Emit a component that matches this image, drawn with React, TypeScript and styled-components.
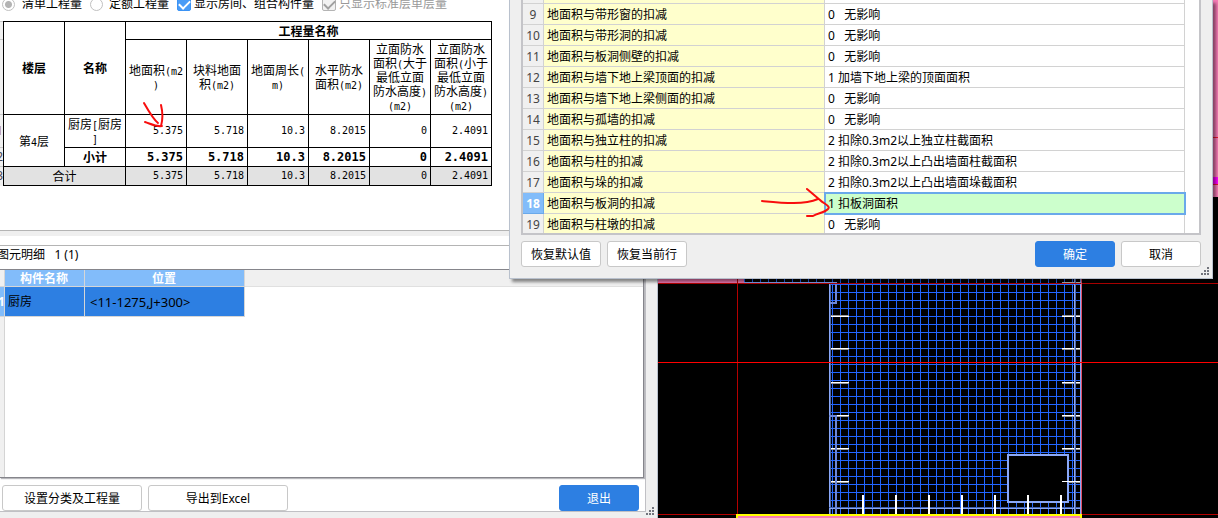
import React from "react";
import styled, { createGlobalStyle, css } from "styled-components";

const uiFont = `"Noto Sans", "Noto Sans CJK SC", sans-serif`;
const reportFont = `"Noto Sans CJK SC", sans-serif`;

const Global = createGlobalStyle`
  * { box-sizing: border-box; }
  body { margin: 0; background: #000; color: #000; font: 12px/16px ${uiFont}; }
  button, input { font: inherit; margin: 0; }
  h2 { margin: 0; font: inherit; }
`;

const Desktop = styled.main`
  position: relative;
  display: grid;
  grid-template-columns: 658fr 560fr;
  min-height: 100vh;
  overflow: hidden;
`;

/* ---------- quantity window ---------- */

const QuantityWindow = styled.section`
  display: flex;
  flex-direction: column;
  min-width: 0;
  padding: 0 11px 6px 0;
  background: #efefef;
  border-right: 1px solid #b9c1cd;
  position: relative;
`;

const ReportPanel = styled.div`
  height: 231px;
  background: #fff;
  border-bottom: 1px solid #b4b4b4;
  margin-bottom: 5px;
`;

const Options = styled.div`
  display: flex;
  align-items: center;
  height: 8px;
  margin-bottom: 13px;
  padding-left: 2px;
  white-space: nowrap;
`;

const Option = styled.label<{ $gap: number; $muted?: boolean }>`
  display: flex;
  align-items: center;
  gap: ${(p) => p.$gap}px;
  margin-right: 8px;
  color: ${(p) => (p.$muted ? "#999" : "#000")};
`;

const Radio = styled.input`
  appearance: none;
  width: 13px;
  height: 13px;
  border: 1px solid #c0c0c0;
  border-radius: 50%;
  background: #fff;
  &:checked {
    background: radial-gradient(circle, #b4b4b4 0 3px, #fff 4px);
  }
`;

const Check = styled.input`
  appearance: none;
  width: 14px;
  height: 14px;
  display: grid;
  place-items: center;
  border: 1px solid #3b93f5;
  border-radius: 2px;
  background: #4a9cf6;
  &::after {
    content: "";
    width: 9px;
    height: 5px;
    border: solid #fff;
    border-width: 0 0 2px 2px;
    transform: translateY(-1px) rotate(-45deg);
  }
  &:disabled {
    border-color: #b4b4b4;
    background: #f2f2f2;
  }
  &:disabled::after {
    border-color: #a0a0a0;
  }
`;

const Report = styled.div`
  display: flex;
`;

const ReportRail = styled.div`
  width: 3px;
  overflow: hidden;
  background: #f0f0f0;
`;

const RailCell = styled.div<{ $h: number; $color?: string }>`
  display: flex;
  justify-content: flex-end;
  align-items: center;
  height: ${(p) => p.$h}px;
  border-top: 1px solid #c8c8c8;
  color: ${(p) => p.$color ?? "#445"};
`;

const ReportTable = styled.table`
  table-layout: fixed;
  width: 489px;
  border-spacing: 0;
  border: solid #000;
  border-width: 1px 0 0 1px;
  font: 12px/14px ${reportFont};
  th, td {
    padding: 0 2px;
    border: solid #000;
    border-width: 0 1px 1px 0;
    text-align: center;
    font-weight: inherit;
    white-space: nowrap;
  }
`;

const ReportRow = styled.tr<{ $h: number; $bold?: boolean; $shade?: boolean }>`
  height: ${(p) => p.$h}px;
  font-weight: ${(p) => (p.$bold ? 700 : 400)};
  background: ${(p) => (p.$shade ? "#e2e2e2" : "#fff")};
`;

const Heading = styled.th`
  && { font-weight: 700; }
`;

const Num = styled.td<{ $bold?: boolean }>`
  && { text-align: right; padding-right: 3px; }
  font-family: "DejaVu Sans Mono", monospace;
  font-size: ${(p) => (p.$bold ? 12 : 10)}px;
`;

const Ascii = styled.span`
  font-family: "DejaVu Sans Mono", monospace;
  font-size: 10px;
  line-height: 10px;
`;

const DetailPanel = styled.div`
  flex: 1;
  display: flex;
  flex-direction: column;
  background: #fff;
  border: solid #c0c0c4;
  border-width: 0 1px 1px 0;
  padding-top: 9px;
`;

const DetailFrame = styled.div`
  flex: 1;
  display: flex;
  flex-direction: column;
  margin-right: 1px;
  border: solid #85858b;
  border-width: 0 1px 1px 0;
  box-shadow: 1px 1px 1px #b8b8bc;
`;

const DetailTitle = styled.h2`
  height: 25px;
  line-height: 18px;
  border-top: 1px solid #b4b4b4;
  border-bottom: 1px solid #85858b;
  text-indent: -3px;
  white-space: pre;
`;

const DetailBody = styled.div`
  flex: 1;
  display: flex;
  background: linear-gradient(#f0f0f0 0 16px, #e0e0e0 16px 17px, #fff 17px);
`;

const DetailGrid = styled.div`
  flex: 1;
  background: linear-gradient(90deg, #f0f0f0 0 4px, #d4d4d4 4px 5px, transparent 5px);
`;

const DetailTable = styled.table`
  table-layout: fixed;
  width: 245px;
  border-spacing: 0;
  th, td {
    padding: 0 4px 0 3px;
    border: solid #d6d6d6;
    border-width: 0 1px 1px 0;
    white-space: nowrap;
  }
  thead tr { height: 17px; line-height: 14px; }
  tbody tr { height: 30px; }
  thead th { padding-top: 2px; background: #82bcfa; color: #fff; }
  thead th:first-child { background: #f0f0f0; }
  tbody th {
    padding: 0;
    background: #82bcfa;
    color: #fff;
    text-align: left;
    text-indent: -2px;
    overflow: hidden;
  }
  tbody td { background: #2d7fe2; }
`;

const Position = styled.td`
  && { padding-left: 5px; }
  font-size: 13px;
`;

const Actions = styled.div`
  display: flex;
  align-items: center;
  gap: 6px;
  padding: 7px 6px 0 2px;
`;

const Button = styled.button<{ $w: number; $primary?: boolean; $push?: boolean }>`
  width: ${(p) => p.$w}px;
  height: 26px;
  padding: 2px 0 0;
  border: 1px solid #c8c8c8;
  border-radius: 3px;
  background: #fff;
  color: #000;
  white-space: nowrap;
  ${(p) => p.$push && css`margin-left: auto;`}
  ${(p) =>
    p.$primary &&
    css`
      border-color: #2d7fe2;
      background: #2d7fe2;
      color: #fff;
    `}
`;

const Grip = styled.svg`
  position: absolute;
  right: 3px;
  bottom: 3px;
  width: 8px;
  height: 8px;
  fill: #72747c;
`;

/* ---------- rule dialog ---------- */

const Dialog = styled.section`
  position: absolute;
  top: 0;
  left: 509px;
  right: 5px;
  padding: 0 11px 11px;
  background: #efefef;
  border: solid #b9c1cd;
  border-width: 0 1px 1px;
  box-shadow: 3px 3px 3px rgba(0, 0, 0, 0.45);
`;

const RuleViewport = styled.div`
  height: 235px;
  overflow: hidden;
  padding-right: 14px;
  background: #fff;
  border: solid #c4c4c8;
  border-width: 0 2px 2px;
`;

const RuleTable = styled.table`
  table-layout: fixed;
  width: 100%;
  border-spacing: 0;
  th, td {
    height: 21px;
    padding: 2px 3px 0;
    border: solid #d2d2d2;
    border-width: 0 1px 1px 0;
    text-align: left;
    font-weight: 400;
    line-height: 18px;
    white-space: pre;
  }
  tr:first-child > * { height: 4px; line-height: 0; }
`;

const RuleNo = styled.th<{ $on?: boolean }>`
  && {
    padding: 2px 0 0;
    text-align: center;
    color: ${(p) => (p.$on ? "#fff" : "#444")};
    background: ${(p) => (p.$on ? "#82bcfa" : "#f0f0f0")};
    ${(p) => p.$on && css`font-weight: 700; border-color: #6aa9ea;`}
  }
`;

const RuleName = styled.td`
  background: #ffffcc;
`;

const RuleValue = styled.td<{ $on?: boolean }>`
  ${(p) =>
    p.$on &&
    css`
      background: #ccffcc;
      outline: 2px solid #6aa9ea;
      outline-offset: -1px;
    `}
`;

const DialogActions = styled.div`
  display: flex;
  gap: 6px;
  padding-top: 6px;
`;

/* ---------- drawing ---------- */

const Drawing = styled.svg`
  display: block;
  width: 100%;
  height: 100%;
  background: #000;
  shape-rendering: crispEdges;
`;

const Marks = styled.svg<{ $x: number; $y: number }>`
  position: absolute;
  left: ${(p) => p.$x}px;
  top: ${(p) => p.$y}px;
  fill: none;
  stroke: #f80d0d;
  stroke-width: 2;
  stroke-linecap: round;
  stroke-linejoin: round;
  pointer-events: none;
`;

const measures: string[][] = [
  ["地面积(m2", ")"],
  ["块料地面", "积(m2)"],
  ["地面周长(", "m)"],
  ["水平防水", "面积(m2)"],
  ["立面防水", "面积(大于", "最低立面", "防水高度)", "(m2)"],
  ["立面防水", "面积(小于", "最低立面", "防水高度)", "(m2)"],
];
const amounts = ["5.375", "5.718", "10.3", "8.2015", "0", "2.4091"];

const rules: [number, string, string][] = [
  [9, "地面积与带形窗的扣减", "0   无影响"],
  [10, "地面积与带形洞的扣减", "0   无影响"],
  [11, "地面积与板洞侧壁的扣减", "0   无影响"],
  [12, "地面积与墙下地上梁顶面的扣减", "1 加墙下地上梁的顶面面积"],
  [13, "地面积与墙下地上梁侧面的扣减", "0   无影响"],
  [14, "地面积与孤墙的扣减", "0   无影响"],
  [15, "地面积与独立柱的扣减", "2 扣除0.3m2以上独立柱截面积"],
  [16, "地面积与柱的扣减", "2 扣除0.3m2以上凸出墙面柱截面积"],
  [17, "地面积与垛的扣减", "2 扣除0.3m2以上凸出墙面垛截面积"],
  [18, "地面积与板洞的扣减", "1 扣板洞面积"],
  [19, "地面积与柱墩的扣减", "0   无影响"],
];
const selectedRule = 18;

function Lines({ lines }: { lines: string[] }) {
  return (
    <>
      {lines.map((line, i) => (
        <React.Fragment key={i}>
          {i > 0 && <br />}
          {line
            .split(/([\x20-\x7e]+)/)
            .filter(Boolean)
            .map((part, j) => (/^[\x20-\x7e]/.test(part) ? <Ascii key={j}>{part}</Ascii> : part))}
        </React.Fragment>
      ))}
    </>
  );
}

function ResizeGrip() {
  return (
    <Grip viewBox="0 0 8 8" aria-hidden="true">
      <path d="M6 0h2v2H6zM3 3h2v2H3zM6 3h2v2H6zM0 6h2v2H0zM3 6h2v2H3zM6 6h2v2H6z" />
    </Grip>
  );
}

const range = (from: number, to: number, step: number) =>
  Array.from({ length: Math.floor((to - from) / step) + 1 }, (_, i) => from + i * step);

function FloorPlan() {
  const ticks = [315, 348, 382, 415, 448, 481];
  return (
    <Drawing aria-label="floor plan">
      <rect x="0" y="0" width="100%" height="197" fill="#f57bb5" />
      <rect x="0" y="177" width="100%" height="7" fill="#ff00ff" />
      <rect x="0" y="137" width="100%" height="1" fill="#e81830" />
      <rect x="0" y="184" width="100%" height="1" fill="#e81830" />
      <rect x="0" y="197" width="424" height="86" fill="#000" />
      <rect x="0" y="270" width="86" height="13" fill="#f57bb5" />
      <g fill="#2266ff">
        {range(86, 422, 8).map((x) => (
          <rect key={x} x={x} y="270" width="1" height={x < 171 ? 12 : 244} />
        ))}
        {range(284, 500, 8).map((y) => (
          <rect key={y} x="171" y={y} width="252" height="1" />
        ))}
      </g>
      {ticks.map((y) => (
        <g key={y}>
          <rect x="173" y={y} width="18" height="1" fill={y < 340 ? "#999" : "#fff"} />
          <rect x="173" y={y + 1} width="18" height="1" fill={y < 340 ? "#fff" : "#999"} />
          <rect x="404" y={y} width="18" height="1" fill={y < 340 ? "#999" : "#fff"} />
          <rect x="404" y={y + 1} width="18" height="1" fill={y < 340 ? "#fff" : "#999"} />
        </g>
      ))}
      <rect x="404" y="282" width="18" height="1" fill="#bbb" />
      <g fill="#8aa8f8">
        <rect x="86" y="282" width="93" height="1" />
        <rect x="171" y="283" width="1" height="231" />
        <rect x="172" y="283" width="1" height="231" fill="#5068a8" />
        <rect x="171" y="507" width="252" height="1" fill="#3f5fae" />
        <rect x="171" y="508" width="252" height="1" />
        <rect x="416" y="279" width="1" height="235" />
        <rect x="417" y="279" width="1" height="235" fill="#5068a8" />
        <rect x="422" y="279" width="1" height="235" />
      </g>
      <path d="M172 303H178V283M178 514V416H171" fill="none" stroke="#6d88d8" strokeWidth="2" />
      <rect x="350" y="455" width="60" height="47" fill="#000" stroke="#8aa8f8" strokeWidth="2" />
      <rect x="404" y="481" width="18" height="1" fill="#fff" />
      <g fill="#fff">
        {[205, 238, 271, 304, 337, 370, 403].map((x) => (
          <rect key={x} x={x - 1} y="495" width="2" height="19" />
        ))}
      </g>
      <g fill="#b40000">
        <rect x="0" y="283" width="100%" height="1" />
        <rect x="0" y="514" width="100%" height="1" />
        <rect x="79" y="279" width="1" height="235" />
        <rect x="423" y="279" width="1" height="235" fill="#e05068" />
        <rect x="0" y="362" width="100%" height="1" fill="#f00" />
      </g>
      <rect x="78" y="514" width="346" height="10" fill="#ff0" />
      <rect x="80" y="516" width="342" height="10" fill="#f57bb5" />
    </Drawing>
  );
}

export default function App() {
  return (
    <>
      <Global />
      <Desktop>
        <QuantityWindow>
          <ReportPanel>
            <Options>
              <Option $gap={7}>
                <Radio type="radio" name="kind" defaultChecked />
                清单工程量
              </Option>
              <Option $gap={6}>
                <Radio type="radio" name="kind" />
                定额工程量
              </Option>
              <Option $gap={3}>
                <Check type="checkbox" defaultChecked />
                显示房间、组合构件量
              </Option>
              <Option $gap={3} $muted>
                <Check type="checkbox" defaultChecked disabled />
                只显示标准层单层量
              </Option>
            </Options>
            <Report>
              <ReportRail>
                <RailCell $h={18} />
                <RailCell $h={75} />
                <RailCell $h={33} $color="#b06a20">1</RailCell>
                <RailCell $h={19}>2</RailCell>
                <RailCell $h={19}>3</RailCell>
              </ReportRail>
              <ReportTable>
                <thead>
                  <ReportRow $h={18}>
                    <Heading rowSpan={2}>楼层</Heading>
                    <Heading rowSpan={2}>名称</Heading>
                    <Heading colSpan={6}>工程量名称</Heading>
                  </ReportRow>
                  <ReportRow $h={75}>
                    {measures.map((m, i) => (
                      <th key={i}>
                        <Lines lines={m} />
                      </th>
                    ))}
                  </ReportRow>
                </thead>
                <tbody>
                  <ReportRow $h={33}>
                    <td rowSpan={2}>
                      <Lines lines={["第4层"]} />
                    </td>
                    <td>
                      <Lines lines={["厨房[厨房", "]"]} />
                    </td>
                    {amounts.map((a, i) => (
                      <Num key={i}>{a}</Num>
                    ))}
                  </ReportRow>
                  <ReportRow $h={19} $bold>
                    <td>小计</td>
                    {amounts.map((a, i) => (
                      <Num key={i} $bold>
                        {a}
                      </Num>
                    ))}
                  </ReportRow>
                  <ReportRow $h={19} $shade>
                    <td colSpan={2}>合计</td>
                    {amounts.map((a, i) => (
                      <Num key={i}>{a}</Num>
                    ))}
                  </ReportRow>
                </tbody>
              </ReportTable>
            </Report>
          </ReportPanel>
          <DetailPanel>
            <DetailFrame>
              <DetailTitle>图元明细{"   "}1 (1)</DetailTitle>
              <DetailBody>
                <DetailGrid>
                  <DetailTable>
                    <colgroup>
                      <col style={{ width: 5 }} />
                      <col style={{ width: 80 }} />
                      <col style={{ width: 160 }} />
                    </colgroup>
                    <thead>
                      <tr>
                        <th />
                        <th>构件名称</th>
                        <th>位置</th>
                      </tr>
                    </thead>
                    <tbody>
                      <tr>
                        <th>1</th>
                        <td>厨房</td>
                        <Position>&lt;11-1275,J+300&gt;</Position>
                      </tr>
                    </tbody>
                  </DetailTable>
                </DetailGrid>
              </DetailBody>
            </DetailFrame>
            <Actions>
              <Button $w={140}>设置分类及工程量</Button>
              <Button $w={140}>导出到Excel</Button>
              <Button $w={80} $primary $push>
                退出
              </Button>
            </Actions>
          </DetailPanel>
          <ResizeGrip />
        </QuantityWindow>
        <FloorPlan />
        <Dialog role="dialog">
          <RuleViewport>
            <RuleTable>
              <colgroup>
                <col style={{ width: 21 }} />
                <col style={{ width: 281 }} />
                <col />
              </colgroup>
              <tbody>
                <tr>
                  <RuleNo />
                  <RuleName />
                  <RuleValue />
                </tr>
                {rules.map(([no, name, value]) => (
                  <tr key={no}>
                    <RuleNo $on={no === selectedRule}>{no}</RuleNo>
                    <RuleName>{name}</RuleName>
                    <RuleValue $on={no === selectedRule}>{value}</RuleValue>
                  </tr>
                ))}
              </tbody>
            </RuleTable>
          </RuleViewport>
          <DialogActions>
            <Button $w={80}>恢复默认值</Button>
            <Button $w={80}>恢复当前行</Button>
            <Button $w={80} $primary $push>
              确定
            </Button>
            <Button $w={80}>取消</Button>
          </DialogActions>
          <ResizeGrip />
        </Dialog>
        <Marks $x={142} $y={101} width="24" height="30">
          <path d="M2 2C6 9 11 18 16 22M19 4C21 12 21 18 19 25M3 21C9 23 14 26 20 25" />
        </Marks>
        <Marks $x={760} $y={186} width="74" height="34">
          <path d="M2 15C24 17 44 19 58 13M47 3L60 14C64 18 71 20 68 23C64 27 58 27 53 30L47 30" />
        </Marks>
      </Desktop>
    </>
  );
}
